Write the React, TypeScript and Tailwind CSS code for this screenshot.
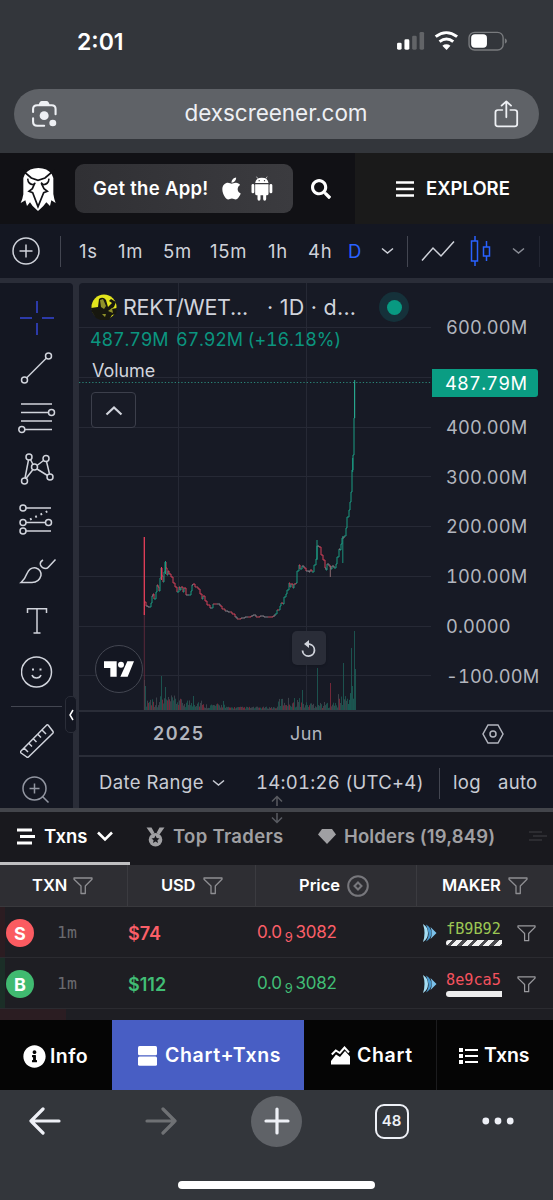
import type { ReactNode } from "react";
import { FaApple, FaInfoCircle, FaSearch } from "react-icons/fa";

const intervals = ["1s", "1m", "5m", "15m", "1h", "4h", "D"];

const priceLabels = ["600.00M", "", "400.00M", "300.00M", "200.00M", "100.00M", "0.0000", "-100.00M"];

const gridRows = [327.5, 377.5, 427.5, 476.5, 526.5, 576.5, 626.5, 675.5];

// [x, y] on the plot, one entry per visible turn of the price
const pricePoints: [number, number][] = [
  [145, 602], [146, 606], [148, 607], [150, 607], [151, 603], [152, 596], [153, 594], [154, 599],
  [156, 592], [157, 585], [158, 587], [159, 591], [160, 578], [161, 568], [162, 576], [163, 582],
  [164, 572], [165, 562], [166, 568], [167, 575], [168, 571], [169, 574], [171, 577], [173, 583],
  [175, 587], [177, 592], [179, 587], [180, 590], [181, 587], [183, 592], [184, 588], [186, 595],
  [189, 595], [191, 591], [192, 585], [193, 584], [195, 587], [198, 589], [200, 594], [202, 599],
  [203, 596], [205, 601], [207, 605], [210, 608], [212, 608], [213, 604], [217, 604], [220, 606],
  [222, 609], [225, 611], [228, 612], [230, 612], [232, 614], [235, 617], [237, 619], [241, 618],
  [245, 617], [248, 617], [251, 616], [253, 615], [256, 617], [260, 616], [264, 617], [268, 617],
  [273, 616], [275, 614], [277, 610], [279, 610], [280, 606], [281, 603], [283, 604], [284, 597],
  [286, 594], [287, 590], [289, 583], [290, 587], [291, 584], [293, 588], [294, 584], [296, 583],
  [297, 571], [299, 565], [300, 569], [302, 566], [304, 568], [306, 571], [309, 572], [310, 570],
  [312, 572], [314, 565], [316, 559], [317, 546], [319, 547], [321, 555], [323, 560], [325, 568],
  [326, 570], [327, 564], [329, 566], [331, 569], [332, 566], [334, 568], [336, 564], [337, 557],
  [339, 549], [340, 550], [341, 544], [342, 538], [344, 536], [346, 528], [347, 517], [349, 510],
  [350, 502], [351, 492], [352, 470], [353, 455], [354, 418], [354.5, 382],
];

const wicks = [
  { x: 161.5, y1: 567, y2: 580, color: "#e0405a" },
  { x: 165.5, y1: 561, y2: 574, color: "#1b9c83" },
  { x: 317, y1: 540, y2: 560, color: "#1b9c83" },
  { x: 330.3, y1: 566, y2: 577, color: "#8b6a70" },
  { x: 342.8, y1: 536, y2: 563, color: "#1b8f79" },
  { x: 352.7, y1: 458, y2: 472, color: "#1b9c83" },
  { x: 354.7, y1: 380, y2: 418, color: "#2aa98f" },
];

const volumeSpikes: Record<number, number> = {
  144: 30, 145: 24, 161: 34, 165: 23, 193: 14, 223: 9, 302: 20, 317: 42, 330: 27, 343: 47, 351: 62, 352: 24, 354: 79, 355: 41,
};

const volumeBars = Array.from({ length: 212 }, (_, i) => {
  const x = 144 + i;
  const noise = Math.abs(Math.sin(i * 12.9898) * 43758.5453) % 1;
  const tint = Math.abs(Math.sin(i * 78.233) * 9631.77) % 1;
  let top = 3;
  if (x < 180) top = 17;
  else if (x < 202) top = 13;
  else if (x < 225) top = 7;
  else if (x > 347) top = 26;
  else if (x > 337) top = 19;
  else if (x > 277) top = x < 303 ? 15 : 9;
  const height = volumeSpikes[x] ?? 1 + top * (0.1 + noise * 0.7);
  let color = tint > 0.76 ? "#7d2a3c" : tint > 0.4 ? "#3f474f" : "#1d5650";
  if (x > 347) color = "#1b5f57";
  if (volumeSpikes[x]) color = x === 330 ? "#7d2a3c" : "#1d5a54";
  return { x, height, color };
});

function Stroke({ w, h, box, children, className = "" }: { w: number; h: number; box?: string; children: ReactNode; className?: string }) {
  return (
    <svg
      width={w}
      height={h}
      viewBox={box ?? `0 0 ${w} ${h}`}
      fill="none"
      stroke="currentColor"
      strokeWidth="1.5"
      className={`shrink-0 ${className}`}
    >
      {children}
    </svg>
  );
}

function Chevron({ className = "" }: { className?: string }) {
  return (
    <Stroke w={13} h={8} className={className}>
      <path d="M1 1.5l5.5 4.5L12 1.5" />
    </Stroke>
  );
}

function Funnel({ size, className = "" }: { size: number; className?: string }) {
  return (
    <Stroke w={size} h={size} box="0 0 20 20" className={className}>
      <path d="M1 2h18v1.3L12.3 10v7.5H8V10L1 3.3z" strokeWidth="1.3" strokeLinejoin="round" />
    </Stroke>
  );
}

function OwlLogo() {
  return (
    <svg width="36" height="44" viewBox="60 57 108 132" className="shrink-0">
      <path
        d="M75 78Q88 60 115 60t40 18l5 12 0 48q2 14 7 27l-13-8-4 17-11-11-9 11-16 15-16-15-8-11-9 11-5-17-14 8q6-12 8-26V90z"
        fill="#fff"
      />
      <g fill="none" stroke="#111115" strokeWidth="4.5">
        <path d="M66 66l28 24 20 7 21-7 28-24" strokeWidth="5" />
        <path d="M83 92q1 17 17 18l6-6M147 92q-1 17-17 18l-7-6" />
        <path d="M104 106l-7 16-10 8 11 4 16 42 17-42 11-4-10-8-8-16" strokeWidth="5" />
      </g>
    </svg>
  );
}

function AndroidRobot() {
  return (
    <svg width="22" height="25" viewBox="753 80 65 75" fill="#fff" className="ml-[8px] shrink-0">
      <path d="M765 101q2-16 20-16t20 16z" />
      <path d="M773 88l-4-6M797 88l4-6" stroke="#fff" strokeWidth="2" />
      <path d="M765 105h40v28q0 5-5 5h-2v11q0 5-4.500 5t-4.500-5v-11h-8v11q0 5-4.500 5t-4.500-5v-11h-2q-5 0-5-5z" />
      <rect x="754" y="104" width="8.500" height="28" rx="4.200" />
      <rect x="808" y="104" width="8.500" height="28" rx="4.200" />
      <circle cx="777" cy="94" r="2" fill="#37373b" />
      <circle cx="793" cy="94" r="2" fill="#37373b" />
    </svg>
  );
}

function StatusBar() {
  return (
    <div className="flex h-[89px] items-start pt-[30px]">
      <span className="ml-[77px] w-[319px] text-[23px] leading-6 font-semibold">2:01</span>
      <svg width="118" height="20" viewBox="1122 94 336 60" preserveAspectRatio="none" className="mt-[1px]">
        <rect x="1125" y="129" width="13" height="21" rx="4" fill="#fff" />
        <rect x="1146" y="119" width="14" height="31" rx="4" fill="#fff" />
        <rect x="1168" y="108" width="13" height="42" rx="4" fill="#626467" />
        <rect x="1189" y="97" width="13" height="53" rx="4" fill="#626467" />
        <path d="M1235 111q30-24 61 0M1246 126q20-16 39 0" fill="none" stroke="#fff" strokeWidth="8.500" />
        <path d="M1254 138q11-8 23 0l-11 13z" fill="#fff" />
        <rect x="1330" y="98" width="97" height="53" rx="16" fill="none" stroke="#797b7e" strokeWidth="4" />
        <rect x="1336" y="104" width="45" height="40" rx="11" fill="#fff" />
        <path d="M1432 116q6 3 6 8t-6 8z" fill="#797b7e" />
      </svg>
    </div>
  );
}

function AddressBar() {
  return (
    <div className="mx-[14px] flex h-[50px] items-center justify-between rounded-full bg-[#5f6267] pr-[20px] pl-[17px] text-[#eef0f4]">
      <svg width="27" height="28" viewBox="88 300 78 84" preserveAspectRatio="none" fill="none" stroke="currentColor" strokeWidth="6">
        <path d="M94 336v-9q0-11 12-11h42q11 0 11 11v16M94 355v10q0 12 12 12h20" strokeLinecap="round" />
        <path d="M110 315q3-12 9-12h14q6 0 9 12z" fill="currentColor" stroke="none" />
        <circle cx="126" cy="347" r="13" fill="currentColor" stroke="none" />
        <circle cx="151" cy="369" r="10" fill="currentColor" stroke="none" />
      </svg>
      <span className="pb-[2px] text-[22.500px] tracking-[-0.050px]">dexscreener.com</span>
      <svg width="25" height="28" viewBox="1401 302 69 84" preserveAspectRatio="none" fill="none" stroke="currentColor" strokeWidth="5" strokeLinecap="round" strokeLinejoin="round">
        <path d="M1424 332h-12q-7 0-7 7v35q0 7 7 7h46q7 0 7-7v-35q0-7-7-7h-12M1435 354v-47M1422 319l13-13 13 13" />
      </svg>
    </div>
  );
}

function SiteHeader() {
  return (
    <div className="flex h-[71px] items-center bg-[#111115]">
      <div className="flex w-[75px] justify-center">
        <OwlLogo />
      </div>
      <div className="flex h-[49px] w-[218px] items-center rounded-[9px] bg-gradient-to-r from-[#303034] to-[#3b3b3f] pl-[18px]">
        <span className="w-[127px] pt-px text-[18.500px] font-semibold tracking-[0.300px] whitespace-nowrap">Get the App!</span>
        <FaApple className="h-[25px] w-[23px]" />
        <AndroidRobot />
      </div>
      <div className="flex w-[62px] justify-center pr-[6px]">
        <FaSearch size={20} />
      </div>
      <div className="flex h-full flex-1 items-center bg-[#1a1a1a] pl-[41px]">
        <Stroke w={18} h={16}>
          <path d="M0 1.500h18M0 8h18M0 14.500h18" strokeWidth="2.600" />
        </Stroke>
        <span className="ml-[12px] text-[18.500px] font-semibold">EXPLORE</span>
      </div>
    </div>
  );
}

function ChartToolbar() {
  return (
    <div className="grid h-[54px] grid-cols-[61px_18px_39px_45px_47px_58px_40px_40px_30px_29px_13px_48px_42px_29px_14px] items-center bg-[#141722] text-[18.500px] text-[#cfd2da]">
      <Stroke w={28} h={28} className="ml-[12px]">
        <circle cx="14" cy="14" r="13" />
        <path d="M14 7.500v13M7.500 14h13" />
      </Stroke>
      <div className="-ml-[1px] h-[31px] w-px bg-[#434651]" />
      {intervals.map((item) => (
        <span key={item} className={item === "D" ? "pt-px text-[#2962ff]" : "pt-px tracking-[0.700px]"}>
          {item}
        </span>
      ))}
      <Chevron className="ml-[3px]" />
      <div className="h-[31px] w-px bg-[#434651]" />
      <Stroke w={34} h={22} className="ml-px">
        <path d="M1 20.500l11-12.500 8 8L33 1.500" />
      </Stroke>
      <Stroke w={22} h={30} className="ml-[2px] text-[#2962ff]">
        <path d="M5 0v5M5 25v5M1.500 5h6v20h-6zM16.500 5v6M16.500 20v5M13.500 11h6v9h-6z" />
      </Stroke>
      <Chevron className="ml-[2px] text-[#8a8d96]" />
      <div className="h-[31px] w-px bg-[#232632]" />
    </div>
  );
}

function DrawingTools() {
  return (
    <div className="flex w-[73px] flex-col items-start rounded-tr-[4px] bg-[#141722] text-[#d1d4dc]">
      <Stroke w={34} h={34} className="mt-[18px] ml-[20px] text-[#3447d6]">
        <path d="M17 0v12M17 22v12M0 17h12M22 17h12" />
      </Stroke>
      <Stroke w={34} h={34} className="mt-[16px] ml-[20px]">
        <circle cx="28.500" cy="5" r="3" />
        <circle cx="4.500" cy="29" r="3" />
        <path d="M6.500 27L26.500 7" />
      </Stroke>
      <Stroke w={38} h={32} className="mt-[17px] ml-[18px]">
        <path d="M3 2h31M3 10.500h27.500M3 19h31M6.500 27.500H34" />
        <circle cx="33.500" cy="10.500" r="3" />
        <circle cx="3.800" cy="27.500" r="3" />
      </Stroke>
      <Stroke w={36} h={34} className="mt-[18px] ml-[19px]">
        <circle cx="10" cy="5" r="3" />
        <circle cx="27" cy="6.500" r="3" />
        <circle cx="15.500" cy="15" r="3" />
        <circle cx="5.500" cy="29" r="3" />
        <circle cx="31" cy="25" r="3" />
        <path d="M9.500 8L6 26M11.500 7.500l2.500 5M7 26.500l7-9M18 13.500l6.500-5M27.500 9.500L30.500 22M18 17l10.500 6.500" />
      </Stroke>
      <Stroke w={36} h={34} className="mt-[17px] ml-[18px]">
        <circle cx="5" cy="5" r="3" />
        <circle cx="5" cy="19.500" r="3" />
        <circle cx="30.500" cy="19.500" r="3" />
        <circle cx="5" cy="28" r="3" />
        <path d="M8 5h25M8 19.500h19.500M8 28h25" />
        <path d="M12 16.500L31 7.500" strokeDasharray="1.800 4" strokeWidth="2" />
      </Stroke>
      <Stroke w={38} h={28} className="mt-[20px] ml-[19px]">
        <path d="M2 25.500Q6 22 8 16.500 11 10 17 11q5.500 2 5 7.500-2 7-9 7zM24 3q-3.500 2-2.500 5 1.500 3.500 5.500 3.500 1.500 0 3-2L36.500 2.500" />
      </Stroke>
      <Stroke w={24} h={28} className="mt-[22px] ml-[25px]">
        <path d="M2.500 6V1.800h19V6M12 1.800v24M8.500 26h7" />
      </Stroke>
      <Stroke w={32} h={32} className="mt-[21px] ml-[21px]">
        <circle cx="15.500" cy="16" r="15" />
        <path d="M11 19q1 3 4.500 3t4.500-3" />
        <path d="M11 13.500h2M18.500 13.500h2" strokeWidth="2" />
      </Stroke>
      <div className="mt-[18px] ml-[11px] h-px w-[51px] bg-[#434651]" />
      <Stroke w={34} h={34} className="mt-[17px] ml-[20px]">
        <path d="M1 27L26.500 1.200q1-.8 1.800 0L33 7.500q.5 1-.2 1.800L8.500 33q-1 .8-1.800 0L.8 28.800q-.8-1 .2-1.800zM4 24l4 4M9 19.500l3 3M13.500 15l3 3M18 10.500l3 3M22 6l4 4" />
      </Stroke>
      <Stroke w={28} h={28} className="mt-[18px] ml-[22px] text-[#9296a1]">
        <circle cx="12.500" cy="12.500" r="11.500" />
        <path d="M12.500 7.500v10M7.500 12.500h10M20.500 20.500l6 6" />
      </Stroke>
    </div>
  );
}

function PricePlot() {
  return (
    <svg width="352" height="427" viewBox="79 283 352 427" className="block shrink-0">
      {gridRows.map((y) => (
        <path key={y} d={`M79 ${y}H431`} stroke="#262935" />
      ))}
      <path d="M178.500 283V710M306.500 283V710" stroke="#262935" />
      <path d="M79 382.500H431" stroke="#2a8477" strokeDasharray="1.300 2" />
      {volumeBars.map((bar) => (
        <rect key={bar.x} x={bar.x} y={710 - bar.height} width="0.9" height={bar.height} fill={bar.color} />
      ))}
      <path d="M144.300 612V710" stroke="#6b2c40" strokeWidth="0.8" />
      <path d="M144.300 537V615" stroke="#e8405a" strokeWidth="1.300" />
      {pricePoints.slice(1).map(([x, y], i) => {
        const [px, py] = pricePoints[i];
        const change = y - py;
        const color = change > 2 ? "#d8415a" : change < -2 ? "#1b9c83" : i % 3 === 0 ? "#c24a5c" : "#858089";
        return <path key={i} d={`M${px} ${py}H${x}V${y}`} fill="none" stroke={color} strokeWidth="1" />;
      })}
      {wicks.map((w) => (
        <path key={w.x} d={`M${w.x} ${w.y1}V${w.y2}`} stroke={w.color} strokeWidth="1" />
      ))}
    </svg>
  );
}

function ChartLegend() {
  return (
    <div className="absolute top-[7px] left-[12px] w-[330px] text-[#d1d4dc]">
      <div className="flex h-[34px] items-center text-[21.500px] whitespace-nowrap">
        <svg width="26" height="26" viewBox="0 0 26 26" className="shrink-0">
          <circle cx="13" cy="13" r="12.500" fill="#e3e51d" />
          <path d="M0 14l7-1 1-8q4-3 7 1l2 7 4-4-3-2 2-2 5 3-2 5-3 2 6-1-1 6-4 1-3 5-6 1-7-3-4-6z" fill="#17170f" />
          <path d="M9 6l3-1 3 7-2 3-3-2zM17 17l4-3 1 5zM11 20l4 0-1 3z" fill="#8f912a" />
        </svg>
        <span className="ml-[6px] w-[144px] tracking-[-0.250px]">REKT/WET...</span>
        <span className="w-[112px] tracking-[0.250px]">· 1D · d...</span>
        <span className="flex h-[30px] w-[30px] shrink-0 items-center justify-center rounded-full bg-[#15313a]">
          <span className="h-[15px] w-[15px] rounded-full bg-[#089981]" />
        </span>
      </div>
      <div className="mt-[2px] -ml-px flex h-[26px] items-center pt-px text-[18px] tracking-[-0.150px] whitespace-nowrap text-[#0b957f] tabular-nums">
        <span className="w-[86px]">487.79M</span>
        <span>67.92M (+16.18%)</span>
      </div>
      <div className="mt-[6px] ml-px flex h-[25px] items-center text-[18px] tracking-[-0.050px]">Volume</div>
      <div className="mt-[9px] flex h-[36px] w-[45px] items-center justify-center rounded-[4px] border border-[#3c3f4b] bg-[#181b26]">
        <Stroke w={18} h={11}>
          <path d="M1.500 9.500L9 2.500l7.500 7" strokeWidth="2.200" />
        </Stroke>
      </div>
    </div>
  );
}

function ChartPanel() {
  return (
    <div className="flex min-w-0 flex-1 flex-col rounded-tl-[4px] bg-[#171a25]">
      <div className="relative flex h-[427px]">
        <PricePlot />
        <div className="flex flex-1 flex-col pt-[20px] pl-[15px] text-[18.300px] tracking-[0.100px] text-[#b2b5be] tabular-nums">
          {priceLabels.map((label, i) => (
            <div key={i} className="flex h-[49.800px] shrink-0 items-center">
              {label}
            </div>
          ))}
        </div>
        <ChartLegend />
        <div className="absolute top-[86px] left-[353px] flex h-[28px] w-[106px] items-center rounded-r-[3px] bg-[#0a9d83] pt-px pl-[13px] text-[18.300px] tracking-[0.200px] text-white tabular-nums">
          487.79M
        </div>
        <div className="absolute top-[362px] left-[16px] flex h-[48px] w-[48px] items-center justify-center rounded-full border-[1.500px] border-[#434651] bg-[#141722]">
          <svg width="30" height="16" viewBox="312 365 90 48" fill="#fff">
            <path d="M312 366h38v46h-19v-26h-19zM382 366h20l-19 46h-22z" />
            <circle cx="363" cy="376" r="9" />
          </svg>
        </div>
        <div className="absolute top-[348px] left-[213px] flex h-[34px] w-[34px] items-center justify-center rounded-[5px] bg-[#2a2d38] text-[#d1d4dc] shadow">
          <Stroke w={18} h={19}>
            <path d="M6 5.200h3.500a6 6 0 11-7 6.300" strokeWidth="1.800" />
            <path d="M9 1v8L4 5z" fill="currentColor" stroke="none" />
          </Stroke>
        </div>
      </div>
      <div className="grid h-[45px] grid-cols-[74px_137px_192px_1fr] items-center border-t-2 border-[#2a2d38] bg-[#141722] text-[18px] text-[#b2b5be]">
        <span />
        <span className="font-semibold tracking-[1.500px]">2025</span>
        <span className="tracking-[0.400px]">Jun</span>
        <Stroke w={22} h={20}>
          <path d="M6 1h10l5 9-5 9H6l-5-9z" />
          <circle cx="11" cy="10" r="3" />
        </Stroke>
      </div>
      <div className="grid h-[53px] grid-cols-[20px_111px_46px_181px_16px_45px_1fr] items-center border-t-2 border-[#2a2d38] bg-[#141722] pt-px text-[18.500px] whitespace-nowrap text-[#c9ccd4]">
        <span />
        <span className="tracking-[0.400px]">Date Range</span>
        <Chevron className="ml-[2px]" />
        <span className="tracking-[0.250px] tabular-nums">14:01:26 (UTC+4)</span>
        <div className="ml-[2px] h-[31px] w-px bg-[#434651]" />
        <span className="tracking-[0.300px]">log</span>
        <span className="tracking-[0.300px]">auto</span>
      </div>
    </div>
  );
}

function TxnTabs() {
  return (
    <div className="relative grid h-[53px] grid-cols-[130px_171px_1fr_24px] bg-[#19191e] text-[18.500px] font-semibold whitespace-nowrap text-[#a0a0a3]">
      <div className="flex items-center border-b-[3px] border-[#bfbfc1] pb-px pl-[17px] text-white">
        <Stroke w={18} h={17}>
          <path d="M0 2h15M3 8.500h15M0 15h15" strokeWidth="3" />
        </Stroke>
        <span className="ml-[9px] w-[53px]">Txns</span>
        <Stroke w={16} h={11}>
          <path d="M1 1.500l7 7 7-7" strokeWidth="2.600" />
        </Stroke>
      </div>
      <div className="flex items-center pb-[4px] pl-[16px]">
        <svg width="19" height="20" viewBox="0 0 19 20" fill="currentColor">
          <path d="M.5.500h5l3 5.500-3 1.500zM18.500.500h-5l-3 5.500 3 1.500z" />
          <circle cx="9.500" cy="12.800" r="6.800" />
          <path d="M9.500 8.500l1.200 2.600 2.800.300-2.100 1.900.600 2.700-2.500-1.400L7 16l.600-2.700-2.100-1.900 2.800-.300z" fill="#19191e" />
        </svg>
        <span className="ml-[8px] tracking-[0.300px]">Top Traders</span>
      </div>
      <div className="flex items-center pb-[4px] pl-[17px]">
        <svg width="18" height="15" viewBox="0 0 18 15" fill="currentColor">
          <path d="M4 0h10l4 5.500L9 15 0 5.500z" />
        </svg>
        <span className="ml-[8px] tracking-[0.150px]">Holders (19,849)</span>
      </div>
      <Stroke w={18} h={12} className="mt-[18px] text-[#2c2c31]">
        <path d="M0 2h13M4 6h14M0 10h13" strokeWidth="2" />
      </Stroke>
      <Stroke w={12} h={29} className="absolute -top-[17px] left-[271px] text-[#595b61]">
        <path d="M6 11V1.500M1 6.500l5-5 5 5M6 18v9.500M1 22.500l5 5 5-5" />
      </Stroke>
    </div>
  );
}

function TableHead() {
  return (
    <div className="grid h-[42px] grid-cols-[128px_128px_161px_1fr] border-b border-[#39393d] bg-[#2e2e33] text-[16.500px] font-semibold text-white">
      <div className="flex items-center border-r border-[#3b3b40] pl-[32px]">
        <span className="w-[41px]">TXN</span>
        <Funnel size={20} className="text-[#8e8e92]" />
      </div>
      <div className="flex items-center border-r border-[#3b3b40] pl-[33px]">
        <span className="w-[42px] tracking-[-0.200px]">USD</span>
        <Funnel size={20} className="text-[#8e8e92]" />
      </div>
      <div className="flex items-center border-r border-[#3b3b40] pl-[43px]">
        <span className="w-[48px]">Price</span>
        <Stroke w={22} h={22} className="text-[#77777c]">
          <circle cx="11" cy="11" r="9.800" strokeWidth="2" />
          <path d="M11 7.500l3.500 3.500-3.500 3.500L7.500 11z" strokeWidth="2" />
        </Stroke>
      </div>
      <div className="flex items-center pl-[25px]">
        <span className="w-[66px] tracking-[-0.200px]">MAKER</span>
        <Funnel size={20} className="text-[#8e8e92]" />
      </div>
    </div>
  );
}

interface TxnRowProps {
  side: "S" | "B";
  usd: string;
  maker: string;
}

function TxnRow({ side, usd, maker }: TxnRowProps) {
  const sell = side === "S";
  return (
    <div className="flex h-[51px] border-b border-[#2b2b30]">
      <div className={`w-[5px] ${sell ? "bg-[#2b1c21]" : "bg-[#1b2e27]"}`} />
      <div className={`grid flex-1 grid-cols-[52px_71px_129px_165px_24px_70px_1fr] items-center pt-[2px] ${sell ? "text-[#fb5f68]" : "text-[#41bd75]"}`}>
        <span
          className={`ml-px flex h-[28px] w-[28px] items-center justify-center rounded-full text-[18px] font-bold text-white ${
            sell ? "bg-[#fb5b61]" : "bg-[#40ba70]"
          }`}
        >
          {side}
        </span>
        <span className="pt-px font-['DejaVu_Sans_Mono',monospace] text-[16.500px] text-[#6a6a6f]">1m</span>
        <span className="text-[18px] font-semibold">{usd}</span>
        <span className="text-[17px] tracking-[-0.250px]">
          0.0<span className="relative top-[4px] mx-[3px] text-[13px]">9</span>3082
        </span>
        <svg width="15" height="20" viewBox="0 0 15 20">
          <path d="M1 1q5 3 5 9t-5 9q3-9 0-18z" fill="#a5dff5" />
          <path d="M4 1.500q5.500 3.500 5.500 8.500T4 18.500q3-5 2.500-8.500T4 1.500z" fill="#4a9ace" />
          <path d="M8.500 4l6 6-6 6q2.500-6 0-12z" fill="#7cc1ea" />
        </svg>
        <span className={`w-[56px] font-['DejaVu_Sans_Mono',monospace] text-[15.200px] leading-[17px] ${sell ? "text-[#9cc653]" : "text-[#f4525e]"}`}>
          {maker}
          <span
            className={`mt-[2px] block h-[6px] rounded-l-[3px] ${
              sell ? "bg-[repeating-linear-gradient(135deg,#f2f2f2_0_4.500px,#4b4b4f_4.500px_7.500px)]" : "bg-[#ededee]"
            }`}
          />
        </span>
        <Funnel size={19} className="ml-px text-[#9a9a9e]" />
      </div>
    </div>
  );
}

function ViewNav() {
  return (
    <div className="grid h-[70px] grid-cols-[112px_192px_133px_1fr] bg-[#050505] text-[19.500px] font-semibold text-white">
      <div className="flex items-center pt-[3px] pl-[23px]">
        <FaInfoCircle size={23} />
        <span className="ml-[4px] tracking-[0.400px]">Info</span>
      </div>
      <div className="flex items-center bg-[#485ec4] pt-px pl-[26px]">
        <Stroke w={19} h={20}>
          <rect x="0" y="0" width="19" height="9.300" rx="1.500" fill="currentColor" stroke="none" />
          <rect x="0" y="10.500" width="19" height="9.300" rx="1.500" fill="currentColor" stroke="none" />
        </Stroke>
        <span className="ml-[8px] tracking-[0.650px]">Chart+Txns</span>
      </div>
      <div className="flex items-center border-r border-[#1c1c1e] pt-px pl-[27px]">
        <Stroke w={19} h={19}>
          <path d="M.8 8.500l4-4 4 2.500L13.500 1.500l4.500 5" strokeWidth="2" />
          <path d="M0 18.500v-3.500l5-6.500 4 2.500 5-6 5 5.500v8z" fill="currentColor" stroke="none" />
        </Stroke>
        <span className="ml-[7px] tracking-[0.650px]">Chart</span>
      </div>
      <div className="flex items-center pt-px pl-[22px]">
        <Stroke w={19} h={16}>
          <path d="M0 2h4M0 8h4M0 14h4" strokeWidth="4" />
          <path d="M6 2h13M6 8h13M6 14h13" strokeWidth="2.200" />
        </Stroke>
        <span className="ml-[6px] tracking-[-0.100px]">Txns</span>
      </div>
    </div>
  );
}

function BrowserToolbar() {
  return (
    <div className="flex h-[110px] flex-col items-center bg-[#33363b] text-[#eef0f6]">
      <div className="grid h-[62px] w-full grid-cols-[89px_143px_89px_141px_71px] items-center justify-items-center">
        <Stroke w={32} h={28}>
          <path d="M30 14H2M14 2L2 14l12 12" strokeWidth="3.200" strokeLinecap="round" strokeLinejoin="round" />
        </Stroke>
        <Stroke w={32} h={28} className="text-[#6f7174]">
          <path d="M2 14h28M18 2l12 12-12 12" strokeWidth="3.200" strokeLinecap="round" strokeLinejoin="round" />
        </Stroke>
        <div className="flex h-[51px] w-[51px] items-center justify-center rounded-full bg-[#5f6267]">
          <Stroke w={26} h={28}>
            <path d="M13 2v24M2 14h22" strokeWidth="3.200" strokeLinecap="round" />
          </Stroke>
        </div>
        <div className="flex h-[35px] w-[34px] items-center justify-center rounded-[9px] border-[2.500px] border-current text-[15px] font-semibold">48</div>
        <Stroke w={32} h={8}>
          <g fill="currentColor" stroke="none">
            <circle cx="3.800" cy="4" r="3.400" />
            <circle cx="16" cy="4" r="3.400" />
            <circle cx="28.200" cy="4" r="3.400" />
          </g>
        </Stroke>
      </div>
      <div className="mt-[29px] h-[8px] w-[197px] rounded-full bg-white" />
    </div>
  );
}

export default function App() {
  return (
    <div className="h-[1200px] w-[553px] overflow-hidden bg-[#33363b] font-['Inter',sans-serif] text-white">
      <div className="h-[153px]">
        <StatusBar />
        <AddressBar />
      </div>
      <SiteHeader />
      <ChartToolbar />
      <div className="flex h-[530px] gap-[6px] bg-[#2a2d38] pt-[5px]">
        <div className="relative flex">
          <DrawingTools />
          <div className="absolute top-[413px] left-[65px] z-10 flex h-[37px] w-[12px] items-center justify-center rounded-[5px] border border-[#2a2d38] bg-[#141722]">
            <Stroke w={5} h={12}>
              <path d="M4 1L1 6l3 5" />
            </Stroke>
          </div>
        </div>
        <ChartPanel />
      </div>
      <div className="h-[4px] bg-[#43454b]" />
      <TxnTabs />
      <TableHead />
      <div className="h-[113px] overflow-hidden bg-[#1e1e23]">
        <TxnRow side="S" usd="$74" maker="fB9B92" />
        <TxnRow side="B" usd="$112" maker="8e9ca5" />
        <div className="h-full w-[66px] bg-[#2b1d22]" />
      </div>
      <ViewNav />
      <BrowserToolbar />
    </div>
  );
}
